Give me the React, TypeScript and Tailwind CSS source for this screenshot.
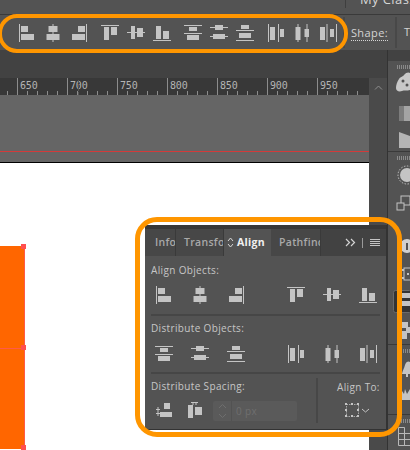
const GLYPHS: Record<string, number[][]> = {
  alignLeft: [[1, 0, 1, 18], [3, 2, 7, 6], [3, 10, 13, 6]],
  alignCenter: [[8.5, 0, 1, 18], [4.5, 2, 9, 6], [2.5, 10, 13, 6]],
  alignRight: [[16, 0, 1, 18], [8, 2, 7, 6], [2, 10, 13, 6]],
  alignTop: [[0, 1, 18, 1], [3, 3, 5, 13], [10, 3, 6, 8]],
  alignMiddle: [[0, 8, 18, 1], [4, 2, 4, 13], [10, 4, 6, 9]],
  alignBottom: [[0, 16, 18, 1], [3, 2, 5, 13], [10, 7, 6, 8]],
  distTop: [[0, 1, 18, 1], [5, 3, 8, 4], [0, 9, 18, 1], [3, 11, 12, 5]],
  distMiddle: [[0, 3, 18, 1], [5, 1, 8, 5], [0, 12, 18, 1], [3, 10, 12, 5]],
  distBottom: [[5, 1, 8, 4], [0, 6, 18, 1], [3, 9, 12, 5], [0, 16, 18, 1]],
  distLeft: [[1, 0, 1, 18], [3, 3, 5, 13], [11, 0, 1, 18], [13, 5, 4, 8]],
  distCenter: [[4.5, 0, 1, 18], [2.5, 3, 5, 13], [13.5, 0, 1, 18], [11.5, 5, 4.5, 8]],
  distRight: [[1, 3, 5, 13], [7.5, 0, 1, 18], [11, 5, 4, 8], [17, 0, 1, 18]],
  spaceV: [[2.5, 5, 1, 9], [1, 7, 4, 1], [1, 11, 4, 1], [9, 1, 6, 6], [5, 10, 12, 5]],
  spaceH: [[3, 0, 7, 1], [4.5, 0, 1, 3], [7.5, 0, 1, 3], [0, 3, 5, 13], [7, 5, 7, 8]],
};

const Glyph = ({ name }: { name: string }) => (
  <svg width="18" height="18" viewBox="0 0 18 18" className="block shrink-0 fill-[#c4c4c4]">
    {GLYPHS[name].map(([x, y, w, h], i) => (
      <rect key={i} x={x} y={y} width={w} height={h} />
    ))}
  </svg>
);

const GlyphRow = ({ names, gap }: { names: string[]; gap: string }) => (
  <div className={`flex ${gap}`}>
    {names.map((n) => (
      <Glyph key={n} name={n} />
    ))}
  </div>
);

const Grip = () => (
  <div className="flex h-[4px] gap-[1px] pl-[9px]">
    {[0, 1, 2, 3, 4, 5, 6].map((i) => (
      <div key={i} className="h-full w-[1px] shrink-0 bg-[#8a8a8a]" />
    ))}
  </div>
);

const RulerCell = ({ label }: { label: string }) => (
  <div className="flex h-full w-[50px] shrink-0 flex-col border-l border-[#8c8c8c]">
    <div className="h-[13px] pl-[2px] font-['DejaVu_Sans_Mono',monospace] text-[10px] leading-[16px] tracking-[-0.2px] text-[#b4b4b4]">
      {label}
    </div>
    <div className="flex h-[4px] pl-[9px]">
      {[0, 1, 2, 3].map((i) => (
        <div key={i} className="h-full w-[10px] shrink-0 border-l border-[#8c8c8c]" />
      ))}
    </div>
  </div>
);

const Tab = ({ label, width, first }: { label: string; width: string; first?: boolean }) => (
  <div
    className={`flex h-full items-center overflow-hidden whitespace-nowrap border-r border-[#3a3a3a] bg-[#474747] text-[10.5px] font-semibold tracking-[0.3px] text-[#a9a9a9] ${width} ${first ? "pl-[10px]" : "pl-[8px]"}`}
  >
    {label}
  </div>
);

function AlignPanel() {
  return (
    <div className="absolute left-[145px] top-[225px] flex h-[205px] w-[242px] flex-col border-b border-r border-[#333] bg-[#535353] font-['Open_Sans',sans-serif]">
      <div className="h-[4px] bg-[#383838]" />
      {/* Tabs */}
      <div className="flex h-[27px] bg-[#424242]">
        <Tab label="Info" width="w-[31px]" first />
        <Tab label="Transfo" width="w-[48px]" />
        <div className="flex h-full w-[47px] items-center gap-[3px] bg-[#535353] pl-[3px] text-[10.5px] font-bold tracking-[0.3px] text-[#f0f0f0]">
          <svg width="7" height="11" viewBox="0 0 7 11" className="fill-none stroke-[#d8d8d8]">
            <path d="M1 4l2.5-3L6 4M1 7l2.5 3L6 7" />
          </svg>
          Align
        </div>
        <Tab label="Pathfinder" width="w-[50px]" />
        <div className="flex flex-1 items-center justify-end gap-[6px] pr-[6px]">
          <svg width="11" height="9" viewBox="0 0 11 9" className="fill-none stroke-[#d4d4d4] stroke-[1.2]">
            <path d="M1 1l3.5 3.5L1 8M6 1l3.5 3.5L6 8" />
          </svg>
          <div className="h-[10px] w-[1px] bg-[#9a9a9a]" />
          <div className="ml-[1px] flex flex-col gap-[1px]">
            {[0, 1, 2, 3].map((i) => (
              <div key={i} className="h-[1px] w-[10px] bg-[#c4c4c4]" />
            ))}
          </div>
        </div>
      </div>

      <div className="flex flex-1 flex-col px-[6px] text-[10px] leading-[14px] tracking-[0.35px] text-[#c6c6c6]">
        <div className="mt-[7px] h-[14px]">Align Objects:</div>
        <div className="ml-[4px] mt-[9px] flex gap-[42px]">
          <GlyphRow names={["alignLeft", "alignCenter", "alignRight"]} gap="gap-[18px]" />
          <GlyphRow names={["alignTop", "alignMiddle", "alignBottom"]} gap="gap-[18px]" />
        </div>
        <div className="mt-[10px] h-[2px] bg-[#464646]" />

        <div className="mt-[5px] h-[14px]">Distribute Objects:</div>
        <div className="ml-[4px] mt-[10px] flex gap-[42px]">
          <GlyphRow names={["distTop", "distMiddle", "distBottom"]} gap="gap-[18px]" />
          <GlyphRow names={["distLeft", "distCenter", "distRight"]} gap="gap-[18px]" />
        </div>
        <div className="mt-[9px] h-[2px] bg-[#464646]" />

        <div className="flex flex-1">
          <div className="w-[165px]">
            <div className="mt-[5px] h-[14px]">Distribute Spacing:</div>
            <div className="ml-[4px] mt-[8px] flex items-center">
              <Glyph name="spaceV" />
              <div className="ml-[15px]">
                <Glyph name="spaceH" />
              </div>
              <div className="ml-[7px] flex h-[20px] w-[84px] items-center rounded-[2px] bg-[#5a5a5a]">
                <div className="flex h-full w-[19px] items-center justify-center border-r border-[#525252]">
                  <svg width="9" height="16" viewBox="0 0 9 16" className="fill-none stroke-[#6e6e6e]">
                    <path d="M1 5l3.5-3.5L8 5M1 11l3.5 3.5L8 11" />
                  </svg>
                </div>
                <span className="pl-[4px] text-[#6f6f6f]">0 px</span>
              </div>
            </div>
          </div>
          <div className="mt-[4px] h-[45px] w-[2px] bg-[#474747]" />
          <div className="pl-[19px]">
            <div className="mt-[6px] h-[14px] whitespace-nowrap">Align To:</div>
            <div className="ml-[8px] mt-[9px]">
              <svg width="26" height="15" viewBox="0 0 26 15" className="block fill-none">
                <rect x="1.5" y="1.5" width="12" height="12" className="stroke-[#a8a8a8]" strokeDasharray="1.5 1" />
                {[[0, 0], [12, 0], [0, 12], [12, 12], [6, 0], [6, 12], [0, 6], [12, 6]].map(([x, y], i) => (
                  <rect key={i} x={x} y={y} width="2" height="2" className="fill-[#c4c4c4]" />
                ))}
                <path d="M17 6l3.5 3L24 6" className="stroke-[#c4c4c4]" />
              </svg>
            </div>
          </div>
        </div>
      </div>
    </div>
  );
}

function Dock() {
  return (
    <div className="flex w-[23px] shrink-0 flex-col overflow-hidden border-l border-[#333] bg-[#535353]">
      <div className="h-[12px] bg-[#424242]" />
      <div className="h-[96px] border-b border-[#3a3a3a] pt-[4px]">
        <Grip />
        <svg width="22" height="78" viewBox="0 0 22 78" className="mt-[3px] block">
          <path d="M11 7c2-3 4-2 5-4 2-3 5-3 6-2v17c-3 1-6 0-8 1-3 1-6 0-6-3 0-3 1-6 3-9z" fill="#c8c8c8" />
          <circle cx="15" cy="9" r="1.5" fill="#535353" />
          <circle cx="19" cy="13" r="1.5" fill="#535353" />
          <rect x="11" y="34" width="12" height="15" fill="#a4a4a4" />
          <path d="M11 34h5v15h-5z" fill="#7c7c7c" />
          <path d="M11 60l11 4v12H11z" fill="#b4b4b4" />
        </svg>
      </div>
      <div className="h-[194px] border-b border-[#3a3a3a] pt-[4px]">
        <Grip />
        <svg width="22" height="182" viewBox="0 0 22 182" className="mt-[2px] block">
          <circle cx="19" cy="13" r="7" fill="#c4c4c4" />
          <circle cx="19" cy="13" r="9" fill="none" stroke="#c4c4c4" strokeDasharray="1.5 1.5" />
          <rect x="13" y="34" width="9" height="9" fill="none" stroke="#c4c4c4" />
          <rect x="9" y="41" width="7" height="7" fill="#535353" stroke="#c4c4c4" />
          <circle cx="19" cy="84" r="7" fill="#d0d0d0" />
          <rect x="18" y="81" width="2" height="7" fill="#535353" />
          <rect x="16" y="106" width="8" height="12" fill="none" stroke="#c4c4c4" />
          <rect x="14" y="107" width="2" height="2" fill="#c4c4c4" />
          <rect x="14" y="115" width="2" height="2" fill="#c4c4c4" />
          <rect x="19" y="111" width="2" height="2" fill="#c4c4c4" />
          <rect x="5.5" y="128.5" width="18" height="22" rx="2" fill="#333" stroke="#6a6a6a" />
          <rect x="10" y="131" width="14" height="5" fill="#c4c4c4" />
          <rect x="10" y="139" width="14" height="5" fill="#c4c4c4" />
          <rect x="14" y="160" width="6" height="6" fill="#c4c4c4" />
          <rect x="14" y="169" width="5" height="8" fill="#c4c4c4" />
          <rect x="18" y="165" width="5" height="6" fill="#c4c4c4" />
        </svg>
      </div>
      <div className="h-[70px] border-b border-[#3a3a3a] pt-[4px]">
        <Grip />
        <svg width="22" height="62" viewBox="0 0 22 62" className="mt-[2px] block">
          <path d="M14 19c1-5 2-5 3-9 1-4 4-4 5-3v12z" fill="#c4c4c4" />
          <rect x="18" y="19" width="2" height="3" fill="#c4c4c4" />
          <path d="M14 36l2 3 1-5 2 5 3-5v11h-8z" fill="#c4c4c4" />
        </svg>
      </div>
      <div className="pt-[4px]">
        <Grip />
        <svg width="22" height="24" viewBox="0 0 22 24" className="mt-[3px] block fill-none stroke-[#b8b8b8]">
          <path d="M10.5 1.5h6v6h-6zM10.5 7.5h6v6h-6zM16.5 7.5h6v6h-6zM10.5 13.5h6v6h-6zM16.5 13.5h6v6h-6z" />
        </svg>
      </div>
    </div>
  );
}

export default function App() {
  return (
    <div className="relative h-[450px] w-[410px] overflow-hidden bg-[#535353] font-['Open_Sans',sans-serif]">
      {/* Title strip */}
      <div className="flex h-[15px] justify-end overflow-hidden border-b border-[#3a3a3a] bg-[#535353]">
        <div className="mr-[14px] h-[8px] w-[1px] bg-[#3f3f3f]" />
        <div className="-mt-[10px] w-[50px] whitespace-nowrap text-[13px] leading-[18px] tracking-[0.4px] text-[#d6d6d6]">
          My Class
        </div>
      </div>

      {/* Control bar */}
      <div className="flex h-[35px] items-center bg-[#535353]">
        <div className="ml-[18px] flex w-[329px] gap-[13px]">
          <GlyphRow names={["alignLeft", "alignCenter", "alignRight"]} gap="gap-[8px]" />
          <GlyphRow names={["alignTop", "alignMiddle", "alignBottom"]} gap="gap-[8px]" />
          <GlyphRow names={["distTop", "distMiddle", "distBottom"]} gap="gap-[8px]" />
          <GlyphRow names={["distLeft", "distCenter", "distRight"]} gap="gap-[8px]" />
        </div>
        <div className="h-[31px] w-[2px] shrink-0 bg-[#484848]" />
        <div className="ml-[6px] w-[44px] shrink-0 text-[11px] leading-[15px] tracking-[0.4px] text-[#d4d4d4]">
          <span className="border-b border-dotted border-[#d4d4d4]">Shape:</span>
        </div>
        <div className="h-[31px] w-[2px] shrink-0 bg-[#484848]" />
        <div className="ml-[7px] text-[11px] text-[#d4d4d4]">T</div>
      </div>

      <div className="flex h-[400px]">
        <div className="flex w-[387px] shrink-0 flex-col">
          <div className="h-[28px] bg-[#424242]" />
          <div className="flex flex-1">
            <div className="flex w-[369px] shrink-0 flex-col">
              {/* Ruler */}
              <div className="relative flex h-[17px] overflow-hidden bg-[#383838]">
                <div className="flex h-full w-[17px] shrink-0 items-end pl-[7px]">
                  <div className="h-[4px] w-[1px] bg-[#8c8c8c]" />
                </div>
                {["650", "700", "750", "800", "850", "900", "950"].map((n) => (
                  <RulerCell key={n} label={n} />
                ))}
                <div className="absolute left-[78px] top-[2px] h-[15px] border-l border-dashed border-[#555]" />
              </div>
              {/* Pasteboard */}
              <div className="h-[68px] border-b border-black bg-[#656565] pt-[56px]">
                <div className="h-[1px] bg-[#d33a3a]" />
              </div>
              {/* Canvas */}
              <div className="flex-1 bg-white pt-[83px]">
                <div className="relative h-[203px] w-[25px] border-r border-[#ff5a48] bg-[#ff6600]">
                  <div className="absolute left-0 right-0 top-[102px] h-[1px] bg-[#ff5a48]" />
                  <div className="absolute -top-[2px] left-[21px] h-[5px] w-[5px] bg-[#ff4f4f]" />
                  <div className="absolute left-[21px] top-[99px] h-[5px] w-[5px] bg-[#ff4f4f]" />
                  <div className="absolute left-[21px] top-[199px] h-[5px] w-[5px] bg-[#ff4f4f]" />
                </div>
              </div>
            </div>
            {/* Scroller */}
            <div className="flex-1 bg-[#4a4a4a] pl-[5px] pt-[7px]">
              <svg width="9" height="5" viewBox="0 0 9 5" className="block fill-none stroke-[#8e8e8e]">
                <path d="M1 4.5l3.5-3.5L8 4.5" />
              </svg>
            </div>
          </div>
        </div>
        <Dock />
      </div>

      <AlignPanel />

      {/* Orange callouts */}
      <div className="absolute -left-[2px] top-[14px] h-[39px] w-[350px] rounded-[19px] border-[4.5px] border-[#ff9600]" />
      <div className="absolute left-[135px] top-[217px] h-[220px] w-[267px] rounded-[22px] border-[5px] border-[#ff9600]" />
    </div>
  );
}
